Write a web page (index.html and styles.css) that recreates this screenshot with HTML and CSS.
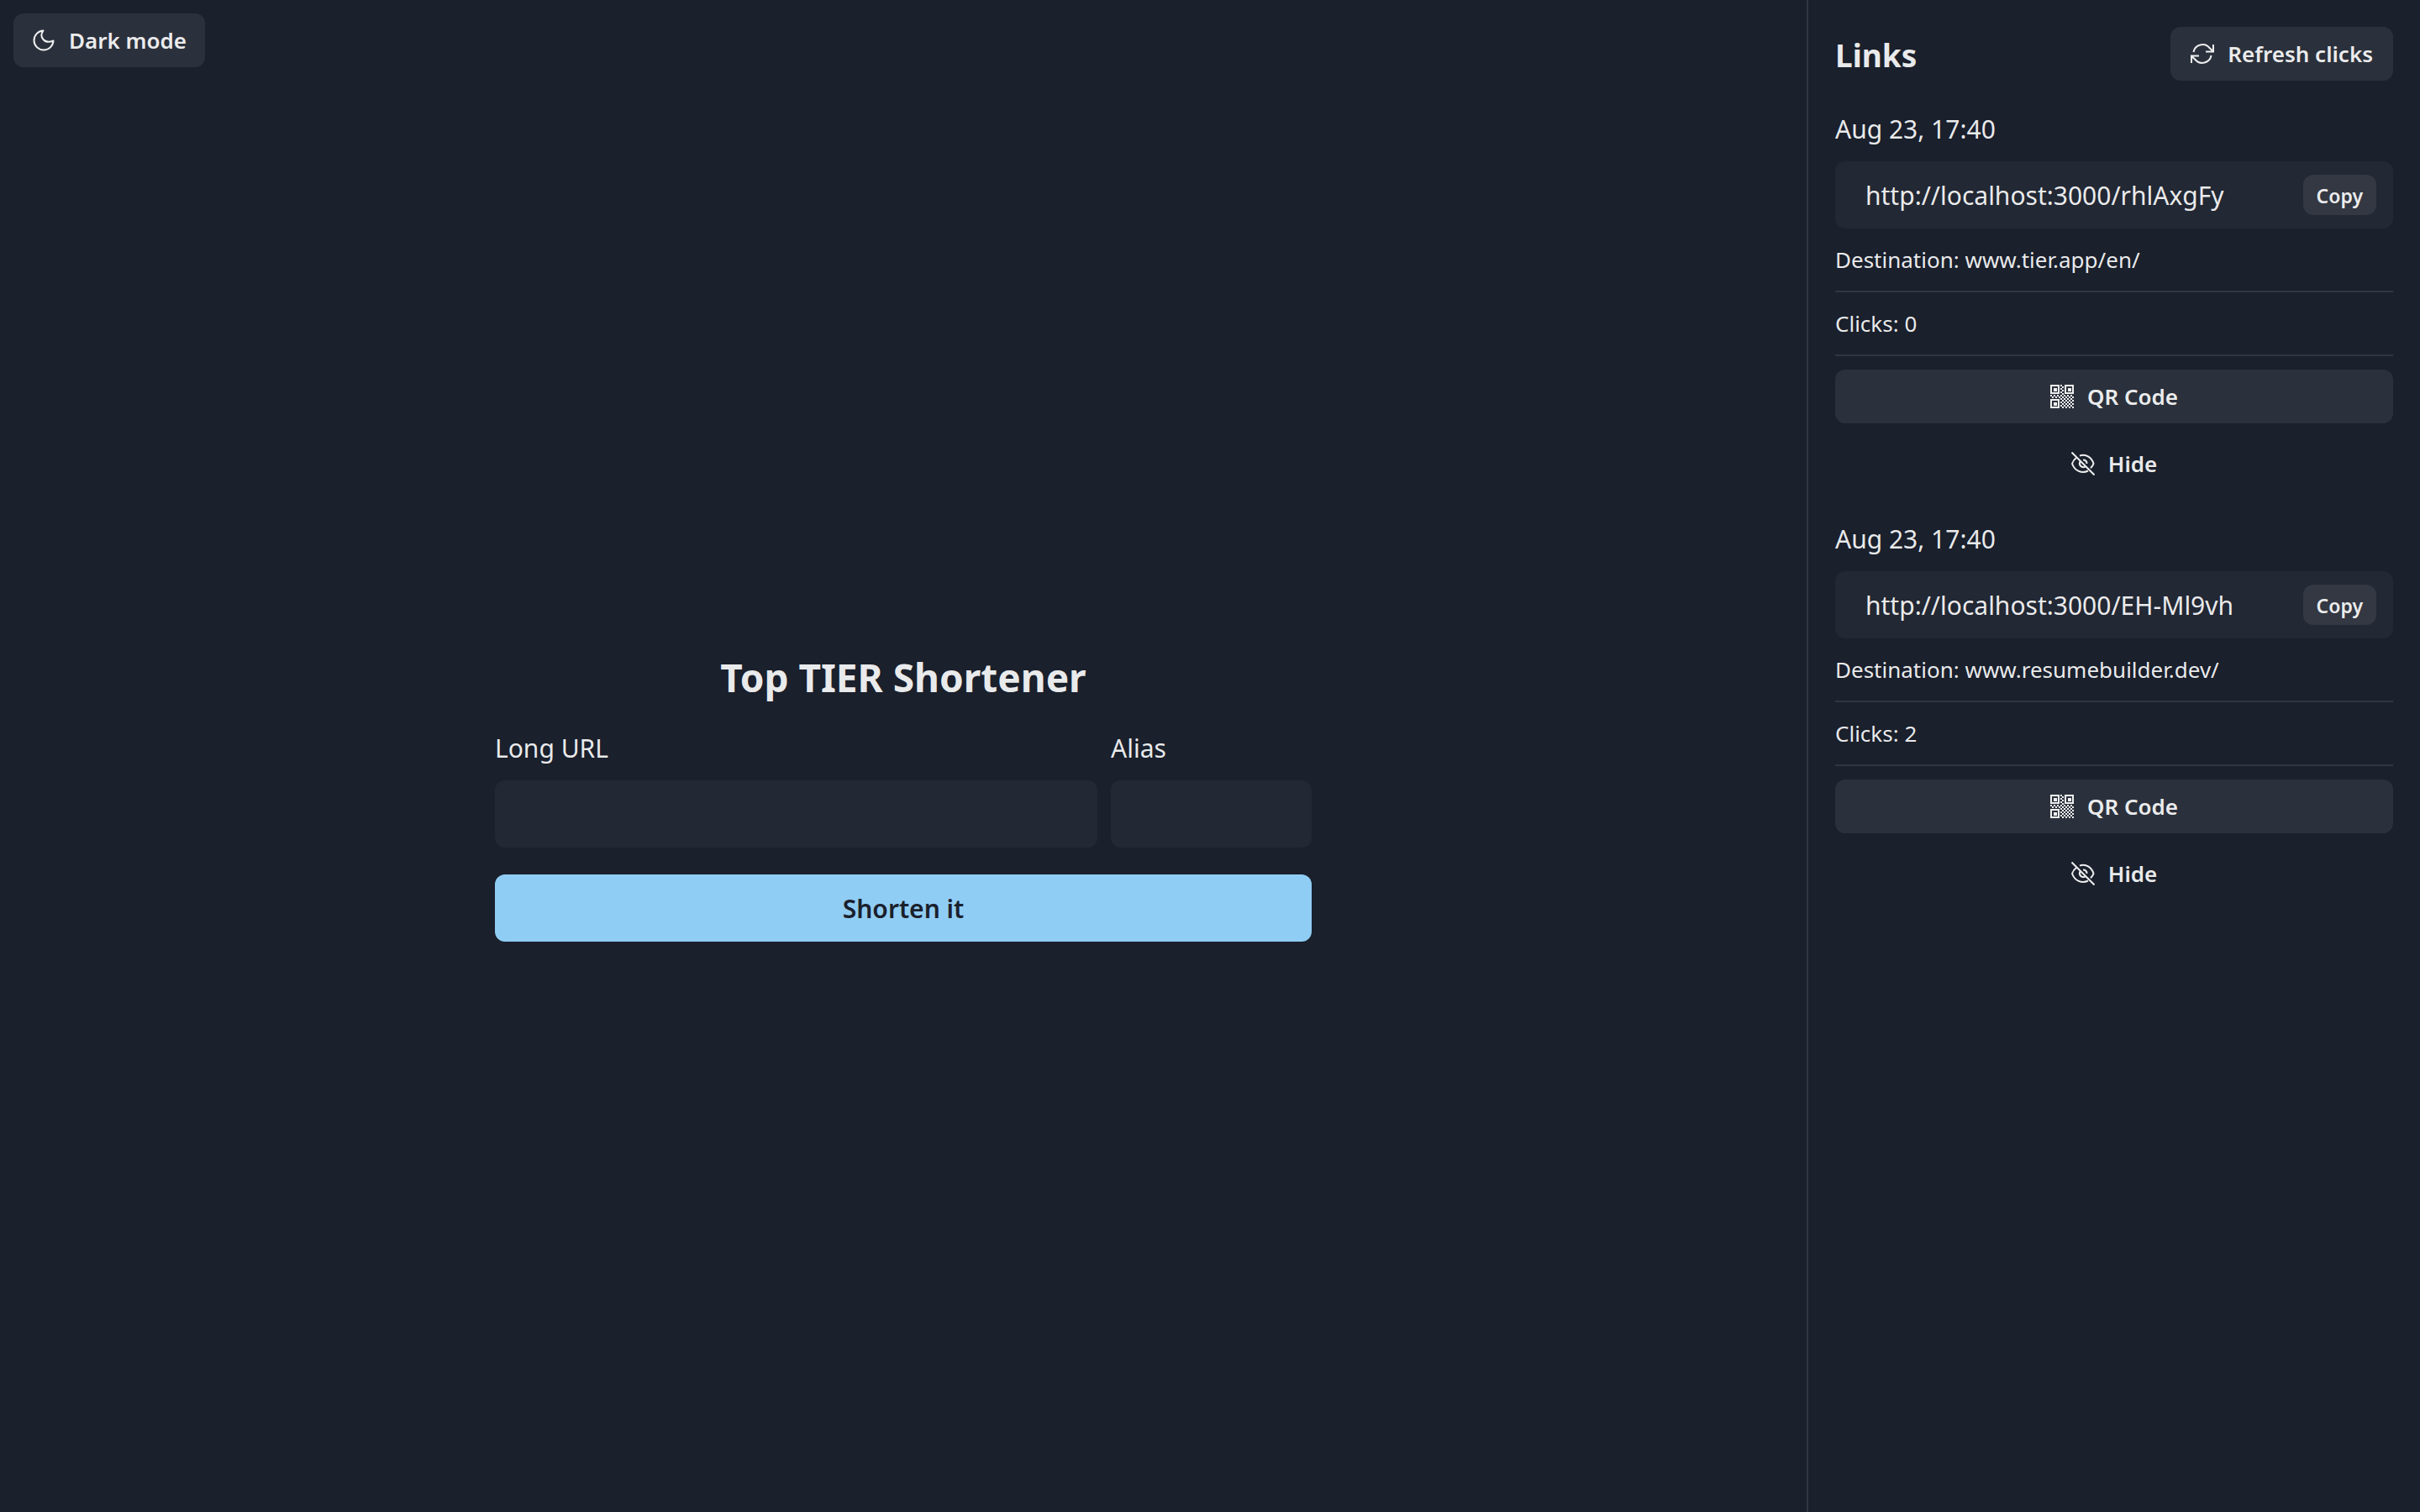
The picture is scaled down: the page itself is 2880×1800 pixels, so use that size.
FILE: index.html
```
<!DOCTYPE html>
<html lang="en">
<head>
  <meta charset="utf-8">
  <meta name="viewport" content="width=device-width, initial-scale=1">
  <title>Top TIER Shortener</title>
  <link rel="stylesheet" href="styles.css">
</head>
<body>
  <svg class="sprite" aria-hidden="true">
    <defs>
      <pattern id="modules" width="4" height="4" patternUnits="userSpaceOnUse">
        <path d="M0 0h2v2H0zM2 2h2v2H2z" fill="currentColor"/>
      </pattern>
    </defs>
    <symbol id="icon-qr" viewBox="0 0 28 28">
      <g fill="none" stroke="currentColor" stroke-width="2">
        <path d="M1 1h9v9H1zM18 1h9v9h-9zM1 18h9v9H1z"/>
      </g>
      <path fill="currentColor" d="M4 4h4v4H4zM21 4h4v4h-4zM4 21h4v4H4z"/>
      <path fill="url(#modules)" d="M12 0h4v12h-4zM0 12h28v4H0zM12 16h16v12H12z"/>
    </symbol>
    <symbol id="icon-hide" viewBox="0 0 28 28">
      <g fill="none" stroke="currentColor" stroke-width="2">
        <path d="M.5.5l27 27"/>
        <path d="M10 4.5C18 2 24.500 7 26.500 14c-.6 2-1.900 3.600-3.500 5.200"/>
        <path d="M6 7C3.500 8.800 2 11 1 14c3 8.500 11.500 12.500 19 8.500"/>
        <path d="M10.500 11.500c-2 4 1.500 7.800 6 6.300M14 9.500c2.800 0 4.500 1.800 4.500 4.500"/>
      </g>
    </symbol>
    <symbol id="icon-refresh" viewBox="0 0 28 28">
      <g fill="none" stroke="currentColor" stroke-width="2">
        <path d="M3.400 12A11 11 0 0 1 22.500 7L27 11.300M27 3v8.500h-9"/>
        <path d="M24.600 16A11 11 0 0 1 5.500 21L1 16.700M1 25v-8.500h9"/>
      </g>
    </symbol>
    <symbol id="icon-moon" viewBox="0 0 28 28">
      <path d="M13.500 2.500C8 10 15 19 25.500 14.500A11.500 11.500 0 1 1 13.500 2.500z" fill="none" stroke="currentColor" stroke-width="2" stroke-linejoin="round"/>
    </symbol>
  </svg>

  <div class="app">
    <main class="main">
      <div class="toolbar">
        <button type="button" class="button"><svg class="icon"><use href="#icon-moon"/></svg>Dark mode</button>
      </div>
      <div class="stage">
        <form class="shortener">
          <h1 class="title">Top TIER Shortener</h1>
          <div class="fields">
            <div class="field">
              <label class="label" for="long-url">Long URL</label>
              <input class="input" id="long-url" type="text">
            </div>
            <div class="field">
              <label class="label" for="alias">Alias</label>
              <input class="input" id="alias" type="text">
            </div>
          </div>
          <button type="button" class="button button-primary">Shorten it</button>
        </form>
      </div>
    </main>

    <aside class="sidebar">
      <header class="sidebar-header">
        <h2 class="sidebar-title">Links</h2>
        <button type="button" class="button"><svg class="icon"><use href="#icon-refresh"/></svg>Refresh clicks</button>
      </header>

      <section class="link">
        <label class="label" for="link-1">Aug 23, 17:40</label>
        <div class="short-url">
          <input class="short-url-value" id="link-1" type="text" value="http://localhost:3000/rhlAxgFy" readonly>
          <button type="button" class="button button-small">Copy</button>
        </div>
        <p class="detail">Destination: www.tier.app/en/</p>
        <hr class="divider">
        <p class="detail">Clicks: 0</p>
        <hr class="divider">
        <button type="button" class="button"><svg class="icon"><use href="#icon-qr"/></svg>QR Code</button>
        <button type="button" class="button button-ghost"><svg class="icon"><use href="#icon-hide"/></svg>Hide</button>
      </section>

      <section class="link">
        <label class="label" for="link-2">Aug 23, 17:40</label>
        <div class="short-url">
          <input class="short-url-value" id="link-2" type="text" value="http://localhost:3000/EH-Ml9vh" readonly>
          <button type="button" class="button button-small">Copy</button>
        </div>
        <p class="detail">Destination: www.resumebuilder.dev/</p>
        <hr class="divider">
        <p class="detail">Clicks: 2</p>
        <hr class="divider">
        <button type="button" class="button"><svg class="icon"><use href="#icon-qr"/></svg>QR Code</button>
        <button type="button" class="button button-ghost"><svg class="icon"><use href="#icon-hide"/></svg>Hide</button>
      </section>
    </aside>
  </div>
</body>
</html>
```
FILE: styles.css
```
*,
*::before,
*::after {
  box-sizing: border-box;
}

body {
  margin: 0;
  background: #1a202c;
  color: rgba(255, 255, 255, 0.92);
  font: 30px/48px "Noto Sans", "Open Sans", sans-serif;
}

h1,
h2,
p,
hr {
  margin: 0;
}

input,
button {
  font: inherit;
  color: inherit;
  border: 0;
}

.sprite {
  display: block;
  width: 0;
  height: 0;
}

.app {
  display: flex;
  min-height: 100vh;
}

.main {
  flex: 1;
  min-width: 0;
  display: flex;
  flex-direction: column;
}

.toolbar {
  display: flex;
  padding: 16px;
}

.stage {
  flex: 1;
  display: flex;
  align-items: center;
  justify-content: center;
}

/* Buttons */

.button {
  display: flex;
  align-items: center;
  justify-content: center;
  gap: 16px;
  height: 64px;
  padding: 0 22px;
  border-radius: 12px;
  background: rgba(255, 255, 255, 0.08);
  font-size: 26px;
  font-weight: 600;
  white-space: nowrap;
  cursor: pointer;
}

.button-primary {
  height: 80px;
  padding-top: 2px;
  background: #90cdf4;
  color: #1a202c;
  font-size: 30px;
}

.button-small {
  height: 48px;
  padding: 2px 16px 0;
  font-size: 23px;
}

.button-ghost {
  background: transparent;
}

.icon {
  flex: none;
  width: 28px;
  height: 28px;
}

.sidebar-header .button {
  padding: 0 24px;
}

/* Form */

.label {
  padding-top: 2px;
  margin-bottom: -2px;
}

.shortener {
  width: 100%;
  max-width: 972px;
  display: flex;
  flex-direction: column;
  gap: 32px;
}

.title {
  margin-bottom: -4px;
  font-size: 46px;
  line-height: 62px;
  font-weight: 700;
  text-align: center;
}

.fields {
  display: grid;
  grid-template-columns: 3fr 1fr;
  gap: 16px;
}

.field {
  display: flex;
  flex-direction: column;
  gap: 16px;
  min-width: 0;
}

.input {
  width: 100%;
  height: 80px;
  padding: 0 36px;
  border-radius: 12px;
  background: rgba(255, 255, 255, 0.04);
}

/* Sidebar */

.sidebar {
  flex: 0 0 730px;
  display: flex;
  flex-direction: column;
  gap: 32px;
  padding: 32px;
  border-left: 2px solid rgba(255, 255, 255, 0.1);
}

.sidebar-header {
  display: flex;
  align-items: center;
  justify-content: space-between;
}

.sidebar-title {
  padding-top: 4px;
  font-size: 37px;
  font-weight: 700;
}

.link {
  display: flex;
  flex-direction: column;
  gap: 16px;
}

.short-url {
  display: flex;
  align-items: center;
  height: 80px;
  padding: 0 20px 0 36px;
  border-radius: 12px;
  background: rgba(255, 255, 255, 0.04);
}

.short-url-value {
  flex: 1;
  min-width: 0;
  padding: 2px 0 0;
  background: transparent;
}

.detail {
  font-size: 26px;
  line-height: 42px;
}

.divider {
  height: 2px;
  border: 0;
  background: rgba(255, 255, 255, 0.1);
}
```
